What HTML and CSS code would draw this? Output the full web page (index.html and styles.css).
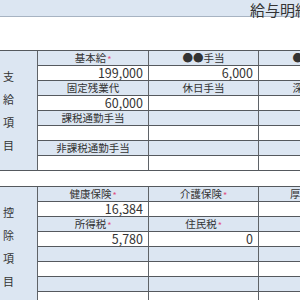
FILE: index.html
```html
<!DOCTYPE html>
<html lang="ja">
<head>
<meta charset="utf-8">
<title>給与明細書</title>
<link rel="stylesheet" href="styles.css">
</head>
<body>
<div class="page">
  <header class="titlebar"><h1 class="title">給与明細書</h1></header>

  <section class="sheet pay">
    <div class="side"><span>支</span><span>給</span><span>項</span><span>目</span></div>
    <div class="cell head">基本給<span class="req">*</span></div>
    <div class="cell head">●●手当</div>
    <div class="cell head">●●手当</div>
    <div class="cell val">199,000</div>
    <div class="cell val">6,000</div>
    <div class="cell val"></div>
    <div class="cell head">固定残業代</div>
    <div class="cell head">休日手当</div>
    <div class="cell head">深夜手当</div>
    <div class="cell val">60,000</div>
    <div class="cell val"></div>
    <div class="cell val"></div>
    <div class="cell head">課税通勤手当</div>
    <div class="cell head"></div>
    <div class="cell head"></div>
    <div class="cell val"></div>
    <div class="cell val"></div>
    <div class="cell val"></div>
    <div class="cell head">非課税通勤手当</div>
    <div class="cell head"></div>
    <div class="cell head"></div>
    <div class="cell val"></div>
    <div class="cell val"></div>
    <div class="cell val"></div>
  </section>

  <section class="sheet deduct">
    <div class="side"><span>控</span><span>除</span><span>項</span><span>目</span></div>
    <div class="cell head">健康保険<span class="req">*</span></div>
    <div class="cell head">介護保険<span class="req">*</span></div>
    <div class="cell head">厚生年金<span class="req">*</span></div>
    <div class="cell val">16,384</div>
    <div class="cell val"></div>
    <div class="cell val"></div>
    <div class="cell head">所得税<span class="req">*</span></div>
    <div class="cell head">住民税<span class="req">*</span></div>
    <div class="cell head"></div>
    <div class="cell val">5,780</div>
    <div class="cell val">0</div>
    <div class="cell val"></div>
    <div class="cell head"></div>
    <div class="cell head"></div>
    <div class="cell head"></div>
    <div class="cell val"></div>
    <div class="cell val"></div>
    <div class="cell val"></div>
    <div class="cell head"></div>
    <div class="cell head"></div>
    <div class="cell head"></div>
    <div class="cell val"></div>
    <div class="cell val"></div>
    <div class="cell val"></div>
  </section>
</div>
</body>
</html>
```
FILE: styles.css
```css
html, body {
  margin: 0;
  padding: 0;
  background: #ffffff;
}
body {
  width: 300px;
  height: 300px;
  overflow: hidden;
  font-family: "Noto Sans CJK JP", "Noto Sans", sans-serif;
  color: #333333;
}
.page {
  width: 369px;
}
.titlebar {
  box-sizing: border-box;
  height: 17px;
  background: #dce6f2;
  border-bottom: 1px solid #a7b3c2;
  padding-left: 250px;
  padding-top: 2px;
}
.title {
  margin: 0;
  font-size: 15px;
  font-weight: normal;
  line-height: 15px;
  white-space: nowrap;
}
.sheet {
  display: grid;
  grid-template-columns: 38px 111px 110px 110px;
  grid-auto-rows: 15px;
  border-top: 1px solid #55595e;
}
.pay {
  margin-top: 33px;
}
.deduct {
  margin-top: 15px;
}
.side {
  grid-row: 1 / span 8;
  grid-column: 1;
  background: #dce6f2;
  border-right: 1px solid #5f6368;
  border-bottom: 1px solid #55595e;
  display: flex;
  flex-direction: column;
  justify-content: center;
  padding-left: 3px;
  font-size: 11px;
  line-height: 23px;
}
.cell {
  box-sizing: border-box;
  border-right: 1px solid #5f6368;
  border-bottom: 1px solid #55595e;
  font-size: 10.5px;
  line-height: 14px;
  white-space: nowrap;
  overflow: visible;
}
.head {
  background: #dce6f2;
  text-align: center;
}
.val {
  background: #ffffff;
  text-align: right;
  padding-right: 5px;
  font-size: 12.5px;
}
.req {
  display: inline-block;
  color: #e0507f;
  font-size: 9px;
  line-height: 9px;
  height: 9px;
  margin-left: 1px;
  vertical-align: -1px;
}
```
